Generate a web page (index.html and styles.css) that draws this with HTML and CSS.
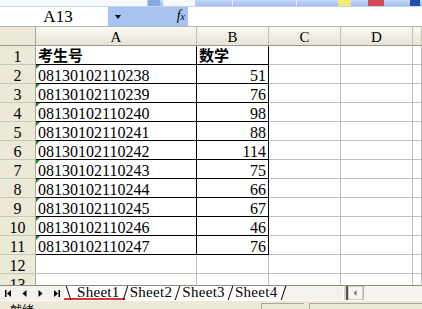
FILE: index.html
```html
<!DOCTYPE html>
<html lang="zh">
<head>
  <meta charset="UTF-8" />
  <title>Excel - Sheet1</title>
  <link rel="stylesheet" href="styles.css">
</head>
<body>
  <!-- toolbar remnant -->
  <div class="toolbar">
    <div class="tb-field w148"></div>
    <div class="tb-drop"></div>
    <div class="tb-gap w3"></div>
    <div class="tb-field w33"></div>
    <div class="tb-gap w36"></div>
    <div class="tb-sep"></div>
    <div class="tb-gap w63"></div>
    <div class="tb-sep"></div>
    <div class="tb-gap w41"></div>
    <div class="tb-yellow"></div>
    <div class="tb-gap w17"></div>
    <div class="tb-red"></div>
    <div class="tb-gap w26"></div>
    <div class="tb-end"></div>
  </div>

  <!-- formula bar -->
  <div class="formula">
    <div class="namebox">A13</div>
    <div class="fx-area">
      <span class="arrow"></span>
      <span class="fx">f<small>x</small></span>
    </div>
    <div class="input"></div>
  </div>

  <!-- sheet -->
  <div class="sheet">
    <div class="corner"></div>
    <div class="ch">A</div>
    <div class="ch">B</div>
    <div class="ch">C</div>
    <div class="ch">D</div>
    <div class="ch"></div>

    <div class="rh">1</div>
    <div class="c b cjk">考生号</div>
    <div class="c b cjk">数学</div>
    <div class="c"></div><div class="c"></div><div class="c"></div>

    <div class="rh">2</div>
    <div class="c b txt">08130102110238</div>
    <div class="c b num">51</div>
    <div class="c"></div><div class="c"></div><div class="c"></div>

    <div class="rh">3</div>
    <div class="c b txt">08130102110239</div>
    <div class="c b num">76</div>
    <div class="c"></div><div class="c"></div><div class="c"></div>

    <div class="rh">4</div>
    <div class="c b txt">08130102110240</div>
    <div class="c b num">98</div>
    <div class="c"></div><div class="c"></div><div class="c"></div>

    <div class="rh">5</div>
    <div class="c b txt">08130102110241</div>
    <div class="c b num">88</div>
    <div class="c"></div><div class="c"></div><div class="c"></div>

    <div class="rh">6</div>
    <div class="c b txt">08130102110242</div>
    <div class="c b num">114</div>
    <div class="c"></div><div class="c"></div><div class="c"></div>

    <div class="rh">7</div>
    <div class="c b txt">08130102110243</div>
    <div class="c b num">75</div>
    <div class="c"></div><div class="c"></div><div class="c"></div>

    <div class="rh">8</div>
    <div class="c b txt">08130102110244</div>
    <div class="c b num">66</div>
    <div class="c"></div><div class="c"></div><div class="c"></div>

    <div class="rh">9</div>
    <div class="c b txt">08130102110245</div>
    <div class="c b num">67</div>
    <div class="c"></div><div class="c"></div><div class="c"></div>

    <div class="rh">10</div>
    <div class="c b txt">08130102110246</div>
    <div class="c b num">46</div>
    <div class="c"></div><div class="c"></div><div class="c"></div>

    <div class="rh">11</div>
    <div class="c b txt">08130102110247</div>
    <div class="c b num">76</div>
    <div class="c"></div><div class="c"></div><div class="c"></div>

    <div class="rh">12</div>
    <div class="c"></div><div class="c"></div><div class="c"></div><div class="c"></div><div class="c"></div>

    <div class="rh">13</div>
    <div class="c"></div><div class="c"></div><div class="c"></div><div class="c"></div><div class="c"></div>
  </div>

  <!-- sheet tabs -->
  <div class="tabbar">
    <div class="nav">
      <span class="navbtn"><svg width="7" height="7" viewBox="0 0 7 7"><rect x="0" y="0" width="1.5" height="7" fill="#000"/><path d="M6 0 L2 3.5 L6 7 Z" fill="#000"/></svg></span>
      <span class="navbtn"><svg width="5" height="7" viewBox="0 0 5 7"><path d="M4.5 0 L0.5 3.5 L4.5 7 Z" fill="#000"/></svg></span>
      <span class="navbtn"><svg width="5" height="7" viewBox="0 0 5 7"><path d="M0.5 0 L4.5 3.5 L0.5 7 Z" fill="#000"/></svg></span>
      <span class="navbtn"><svg width="7" height="7" viewBox="0 0 7 7"><path d="M1 0 L5 3.5 L1 7 Z" fill="#000"/><rect x="5.5" y="0" width="1.5" height="7" fill="#000"/></svg></span>
    </div>
    <div class="tabs">
      <div class="tab first active">Sheet1</div>
      <div class="tab">Sheet2</div>
      <div class="tab">Sheet3</div>
      <div class="tab">Sheet4</div>
    </div>
    <div class="tab-space"></div>
    <div class="splitter"></div>
    <div class="hs-btn"><svg width="4" height="6" viewBox="0 0 4 6"><path d="M3.5 0 L0.5 3 L3.5 6 Z" fill="#7a7a7a"/></svg></div>
    <div class="hs-track"></div>
  </div>

  <!-- status bar -->
  <div class="status">
    <div class="status-text">就绪</div>
    <div class="panel p1"></div>
    <div class="panel p2"></div>
  </div>
</body>
</html>
```

FILE: styles.css
```css
* {
  box-sizing: border-box;
}

body {
  margin: 0;
  width: 422px;
  height: 309px;
  overflow: hidden;
  background: #fff;
  font-family: "Liberation Serif", "Noto Sans CJK SC", serif;
  color: #000;
}

/* toolbar strip */
.toolbar {
  display: flex;
  height: 6px;
  background: linear-gradient(#c6dafa, #9dbbed);
}

.tb-field {
  background: #f7f9fd;
  border-right: 1px solid #b9cae6;
}

.tb-drop {
  width: 12px;
  background: #86a8e4;
}

.tb-sep {
  width: 1px;
  background: #e6eefb;
}

.tb-yellow {
  width: 13px;
  background: #f1ec7c;
}

.tb-red {
  width: 16px;
  background: #d44b57;
}

.tb-end {
  width: 10px;
  background: #1f4fa8;
}

.w3 { width: 3px; }
.w17 { width: 17px; }
.w26 { width: 26px; }
.w33 { width: 33px; }
.w36 { width: 36px; }
.w41 { width: 41px; }
.w63 { width: 63px; }
.w148 { width: 148px; }

/* formula bar */
.formula {
  display: flex;
  height: 21px;
  border-top: 1px solid #c7d3e6;
  border-bottom: 1px solid #b5b5b5;
}

.namebox {
  width: 108px;
  padding-left: 8px;
  text-align: center;
  font-size: 17px;
  line-height: 19px;
  background: #fff;
}

.fx-area {
  width: 80px;
  display: flex;
  align-items: center;
  justify-content: space-between;
  padding: 0 3px 0 7px;
  background: #a7c3f2;
}

.arrow {
  width: 0;
  height: 0;
  border-left: 3px solid transparent;
  border-right: 3px solid transparent;
  border-top: 4px solid #000;
}

.fx {
  font-style: italic;
  font-size: 14px;
  line-height: 14px;
}

.fx small {
  font-size: 10px;
}

.input {
  flex: 1;
  background: #fff;
}

/* grid */
.sheet {
  display: grid;
  grid-template-columns: 36px 161px 72px 72px 72px 9px;
  grid-auto-rows: 19px;
  height: 258px;
  overflow: hidden;
}

.corner {
  background: #ece9d8;
  border-right: 1px solid #aca899;
  border-bottom: 1px solid #9d9a8a;
}

.ch {
  background: linear-gradient(#f9f8f3, #e7e4d6);
  border-right: 1px solid #c5c1b1;
  border-bottom: 1px solid #9d9a8a;
  text-align: center;
  font-size: 15px;
  line-height: 15px;
  padding-top: 3px;
}

.rh {
  background: #ece9d8;
  border-right: 1px solid #aca899;
  border-bottom: 1px solid #cbc7b8;
  text-align: center;
  font-size: 16px;
  line-height: 15px;
  padding-top: 3px;
}

.c {
  position: relative;
  border-right: 1px solid #c0c0c0;
  border-bottom: 1px solid #c0c0c0;
  font-size: 16px;
  line-height: 15px;
  padding: 3px 2px 0 2px;
  white-space: nowrap;
  overflow: hidden;
}

.c.b {
  border-right-color: #000;
  border-bottom-color: #000;
}

.cjk {
  font-family: "Noto Sans CJK SC", sans-serif;
  font-weight: bold;
  font-size: 15px;
  line-height: 17px;
  padding-top: 0;
  overflow: visible;
}

.num {
  text-align: right;
}

/* "number stored as text" marker */
.txt::before {
  content: "";
  position: absolute;
  left: 0;
  top: 0;
  border-top: 4px solid #1f8a1f;
  border-right: 4px solid transparent;
}

/* sheet tabs */
.tabbar {
  display: flex;
  height: 15px;
  background: #f3f2ec;
  border-top: 1px solid #8e8c80;
}

.nav {
  width: 64px;
  display: flex;
  align-items: center;
}

.navbtn {
  width: 16px;
  display: flex;
  justify-content: center;
}

.tabs {
  display: flex;
}

.tab {
  position: relative;
  padding: 0 5px;
  font-size: 15px;
  line-height: 13px;
  letter-spacing: 0.3px;
  background: #fff;
}

.tab::after {
  content: "";
  position: absolute;
  z-index: 1;
  right: -1px;
  top: 0;
  height: 14px;
  width: 1px;
  background: #000;
  transform: skewX(-18deg);
}

.tab.first {
  padding-left: 13px;
}

.tab.first::before {
  content: "";
  position: absolute;
  z-index: 1;
  left: 4px;
  top: 0;
  height: 14px;
  width: 1px;
  background: #000;
  transform: skewX(18deg);
}

.tab.active {
  border-bottom: 2px solid #e2342c;
}

.tab-space {
  flex: 1;
}

.splitter {
  width: 5px;
  margin-left: 2px;
  border-left: 1px solid #fff;
  border-right: 2px solid #555;
  background: #d8d5c6;
}

.hs-btn {
  width: 15px;
  display: flex;
  align-items: center;
  justify-content: center;
  border: 1px solid #cfcdc2;
  background: #f7f6f2;
}

.hs-track {
  flex: 1;
  border-left: 1px solid #b9b7ab;
  background: #f4f3ee;
}

/* status bar */
.status {
  display: flex;
  height: 9px;
  background: #ece9d8;
  border-top: 1px solid #fff;
}

.status-text {
  width: 261px;
  padding: 3px 0 0 10px;
  font-family: "Noto Sans CJK SC", sans-serif;
  font-size: 12px;
  line-height: 12px;
  overflow: hidden;
}

.panel {
  margin-top: 2px;
  border-top: 1px solid #aca899;
  border-left: 1px solid #aca899;
}

.p1 {
  width: 43px;
  margin-right: 5px;
}

.p2 {
  flex: 1;
}
```
